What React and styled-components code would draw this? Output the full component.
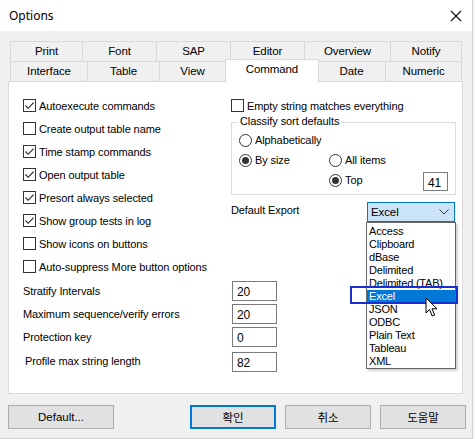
import styled, { createGlobalStyle } from "styled-components";

const GlobalStyle = createGlobalStyle`
  html, body { margin: 0; padding: 0; background: #f7f7f7; }
  body {
    font-family: "Liberation Sans", "Noto Sans CJK KR", Arial, sans-serif;
    font-size: 11px;
    letter-spacing: -0.1px;
    color: #000;
  }
`;

const topTabs = [
  { label: "Print", width: 73 },
  { label: "Font", width: 74 },
  { label: "SAP", width: 74 },
  { label: "Editor", width: 74 },
  { label: "Overview", width: 86 },
  { label: "Notify", width: 71 },
];

const bottomTabs = [
  { label: "Interface", width: 78 },
  { label: "Table", width: 72 },
  { label: "View", width: 66 },
  { label: "Command", width: 92, selected: true },
  { label: "Date", width: 68 },
  { label: "Numeric", width: 76 },
];

const leftChecks = [
  { label: "Autoexecute commands", checked: true },
  { label: "Create output table name", checked: false },
  { label: "Time stamp commands", checked: true },
  { label: "Open output table", checked: true },
  { label: "Presort always selected", checked: true },
  { label: "Show group tests in log", checked: true },
  { label: "Show icons on buttons", checked: false },
  { label: "Auto-suppress More button options", checked: false },
];

const numberFields = [
  { label: "Stratify Intervals", value: "20" },
  { label: "Maximum sequence/verify errors", value: "20" },
  { label: "Protection key", value: "0" },
  { label: "Profile max string length", value: "82", shifted: true },
];

const exportOptions = [
  "Access",
  "Clipboard",
  "dBase",
  "Delimited",
  "Delimited (TAB)",
  "Excel",
  "JSON",
  "ODBC",
  "Plain Text",
  "Tableau",
  "XML",
];

function CheckBox({ checked, label }) {
  return (
    <CheckRow>
      <Box>
        {checked && (
          <svg width="11" height="11" viewBox="0 0 11 11">
            <polyline points="1.5,5.5 4.2,8.3 9.6,2.6" fill="none" stroke="#222" strokeWidth="1.1" />
          </svg>
        )}
      </Box>
      <span>{label}</span>
    </CheckRow>
  );
}

function Radio({ checked, label }) {
  return (
    <RadioRow>
      <Circle>{checked && <Dot />}</Circle>
      <span>{label}</span>
    </RadioRow>
  );
}

export default function App() {
  return (
    <>
      <GlobalStyle />
      <Window>
        <TitleBar>
          <span>Options</span>
          <svg width="12" height="12" viewBox="0 0 12 12">
            <path d="M1 1 L11 11 M11 1 L1 11" stroke="#111" strokeWidth="1.1" />
          </svg>
        </TitleBar>

        <Body>
          <TabRow>
            {topTabs.map((t) => (
              <Tab key={t.label} $width={t.width}>{t.label}</Tab>
            ))}
          </TabRow>
          <TabRow>
            {bottomTabs.map((t) =>
              t.selected ? (
                <ActiveTab key={t.label} $width={t.width}>{t.label}</ActiveTab>
              ) : (
                <Tab key={t.label} $width={t.width}>{t.label}</Tab>
              )
            )}
          </TabRow>

          <Panel>
            <Columns>
              <LeftColumn>
                {leftChecks.map((c) => (
                  <CheckBox key={c.label} {...c} />
                ))}
              </LeftColumn>

              <RightColumn>
                <CheckBox label="Empty string matches everything" checked={false} />
                <Group>
                  <Legend>Classify sort defaults</Legend>
                  <RadioGrid>
                    <Radio label="Alphabetically" />
                    <span />
                    <Radio label="By size" checked />
                    <Radio label="All items" />
                    <span />
                    <TopCell>
                      <Radio label="Top" checked />
                      <SmallInput>41</SmallInput>
                    </TopCell>
                  </RadioGrid>
                </Group>

                <ExportRow>
                  <span>Default Export</span>
                  <SelectWrap>
                    <Select>
                      <span>Excel</span>
                      <svg width="10" height="6" viewBox="0 0 10 6">
                        <polyline points="0.5,0.5 5,5 9.5,0.5" fill="none" stroke="#333" strokeWidth="1" />
                      </svg>
                    </Select>
                    <DropList>
                      {exportOptions.map((o) => (
                        <Option key={o} $active={o === "Excel"}>{o}</Option>
                      ))}
                    </DropList>
                    <Marker />
                    <Cursor width="14" height="21" viewBox="0 0 14 21">
                      <path
                        d="M1 1 L1 16 L4.5 12.5 L7.2 19 L9.6 18 L7 11.8 L12 11.8 Z"
                        fill="#fff"
                        stroke="#000"
                        strokeWidth="1"
                        strokeLinejoin="round"
                      />
                    </Cursor>
                  </SelectWrap>
                </ExportRow>
              </RightColumn>
            </Columns>

            <Fields>
              {numberFields.map((f) => (
                <FieldRow key={f.label} $shifted={f.shifted}>
                  <FieldLabel $shifted={f.shifted}>{f.label}</FieldLabel>
                  <NumberBox>{f.value}</NumberBox>
                </FieldRow>
              ))}
            </Fields>
          </Panel>

          <ButtonBar>
            <Button $width={106}>Default...</Button>
            <Spacer />
            <Button $width={86} $primary>확인</Button>
            <Button $width={86}>취소</Button>
            <Button $width={86}>도움말</Button>
          </ButtonBar>
        </Body>
      </Window>
    </>
  );
}

const Window = styled.div`
  width: 472px;
  height: 438px;
  background: #f0f0f0;
  border-right: 1px solid #d4d4d4;
  border-bottom: 1px solid #d4d4d4;
  display: flex;
  flex-direction: column;
`;

const TitleBar = styled.div`
  height: 31px;
  background: #fff;
  display: flex;
  align-items: center;
  justify-content: space-between;
  padding: 0 10px 0 9px;
  font-family: "Noto Sans", sans-serif;
  font-size: 12px;
  letter-spacing: 0;
`;

const Body = styled.div`
  padding: 10px 0 0 8px;
`;

const TabRow = styled.div`
  display: flex;
  margin-left: 2px;
  height: 20px;
  position: relative;
`;

const Tab = styled.div`
  width: ${(p) => p.$width}px;
  box-sizing: border-box;
  border: 1px solid #d9d9d9;
  border-bottom: none;
  border-left-width: 0;
  &:first-child { border-left-width: 1px; }
  background: #f0f0f0;
  display: flex;
  align-items: center;
  justify-content: center;
  font-size: 11.5px;
  line-height: 1;
`;

const ActiveTab = styled(Tab)`
  position: relative;
  top: -2px;
  height: 24px;
  margin-left: -1px;
  margin-right: -1px;
  width: ${(p) => p.$width + 2}px;
  border-left-width: 1px;
  background: #fff;
  z-index: 2;
  align-items: flex-start;
  padding-top: 4px;
`;

const Panel = styled.div`
  width: 455px;
  height: 313px;
  box-sizing: border-box;
  background: #fff;
  border: 1px solid #d9d9d9;
  padding: 12px 0 0 14px;
`;

const Columns = styled.div`
  display: grid;
  grid-template-columns: 208px 225px;
`;

const LeftColumn = styled.div`
  display: flex;
  flex-direction: column;
`;

const RightColumn = styled.div`
  display: flex;
  flex-direction: column;
`;

const CheckRow = styled.div`
  height: 23px;
  display: flex;
  align-items: center;
  gap: 3px;
  white-space: nowrap;
`;

const Box = styled.div`
  flex-shrink: 0;
  width: 13px;
  height: 13px;
  box-sizing: border-box;
  border: 1px solid #333;
  background: #fff;
  display: flex;
  align-items: center;
  justify-content: center;
`;

const Group = styled.div`
  position: relative;
  margin-top: 5px;
  height: 73px;
  box-sizing: border-box;
  border: 1px solid #dcdcdc;
  padding: 7px 0 0 7px;
`;

const Legend = styled.div`
  position: absolute;
  top: -8px;
  left: 6px;
  padding: 0 2px;
  background: #fff;
`;

const RadioGrid = styled.div`
  display: grid;
  grid-template-columns: 90px 1fr;
  grid-auto-rows: 20px;
`;

const RadioRow = styled.div`
  display: flex;
  align-items: center;
  gap: 3px;
  white-space: nowrap;
`;

const Circle = styled.div`
  flex-shrink: 0;
  width: 13px;
  height: 13px;
  box-sizing: border-box;
  border: 1px solid #333;
  border-radius: 50%;
  display: flex;
  align-items: center;
  justify-content: center;
`;

const Dot = styled.div`
  width: 7px;
  height: 7px;
  border-radius: 50%;
  background: #333;
`;

const TopCell = styled.div`
  display: flex;
  justify-content: space-between;
  align-items: center;
  padding-right: 7px;
`;

const SmallInput = styled.div`
  width: 25px;
  height: 19px;
  box-sizing: border-box;
  border: 1px solid #7a7a7a;
  margin-top: 2px;
  padding: 3px 0 0 4px;
  font-size: 12px;
`;

const ExportRow = styled.div`
  margin-top: 9px;
  display: flex;
  justify-content: space-between;
  align-items: flex-start;
  padding-right: 1px;
`;

const SelectWrap = styled.div`
  position: relative;
  margin-top: -2px;
`;

const Select = styled.div`
  width: 88px;
  height: 20px;
  box-sizing: border-box;
  border: 1px solid #0078d7;
  background: #cce4f7;
  display: flex;
  align-items: center;
  justify-content: space-between;
  padding: 0 5px 0 3px;
  font-size: 11.5px;
`;

const DropList = styled.div`
  position: absolute;
  top: 20px;
  left: -1px;
  width: 90px;
  box-sizing: border-box;
  border: 1px solid #646464;
  background: #fff;
  box-shadow: 2px 2px 2px rgba(0, 0, 0, 0.18);
  padding: 2px 0 0;
  z-index: 3;
`;

const Option = styled.div`
  height: 13px;
  line-height: 13px;
  padding-left: 2px;
  font-size: 11px;
  letter-spacing: -0.2px;
  background: ${(p) => (p.$active ? "#0078d7" : "transparent")};
  color: ${(p) => (p.$active ? "#fff" : "#000")};
`;

const Marker = styled.div`
  position: absolute;
  top: 84px;
  left: -17px;
  width: 108px;
  height: 18px;
  box-sizing: border-box;
  border: 2px solid #1a2fcf;
  z-index: 4;
`;

const Cursor = styled.svg`
  position: absolute;
  top: 95px;
  left: 58px;
  z-index: 5;
`;

const Fields = styled.div`
  display: flex;
  flex-direction: column;
  margin-top: 1px;
  width: 254px;
`;

const FieldRow = styled.div`
  height: 23px;
  display: flex;
  align-items: center;
  justify-content: space-between;
  margin-top: ${(p) => (p.$shifted ? "2px" : "0")};
`;

const FieldLabel = styled.span`
  padding-left: ${(p) => (p.$shifted ? "2px" : "0")};
  margin-top: ${(p) => (p.$shifted ? "-2px" : "0")};
`;

const NumberBox = styled.div`
  width: 45px;
  height: 20px;
  box-sizing: border-box;
  border: 1px solid #7a7a7a;
  padding: 3px 0 0 4px;
  font-size: 12px;
`;

const ButtonBar = styled.div`
  display: flex;
  gap: 9px;
  margin-top: 11px;
  width: 458px;
`;

const Spacer = styled.div`
  flex: 1;
`;

const Button = styled.div`
  width: ${(p) => p.$width}px;
  height: 24px;
  box-sizing: border-box;
  background: #e1e1e1;
  border: ${(p) => (p.$primary ? "2px solid #0078d7" : "1px solid #adadad")};
  display: flex;
  align-items: center;
  justify-content: center;
  font-family: "Liberation Sans", "Noto Sans CJK KR", sans-serif;
  font-size: 11.5px;
  letter-spacing: 0;
`;
